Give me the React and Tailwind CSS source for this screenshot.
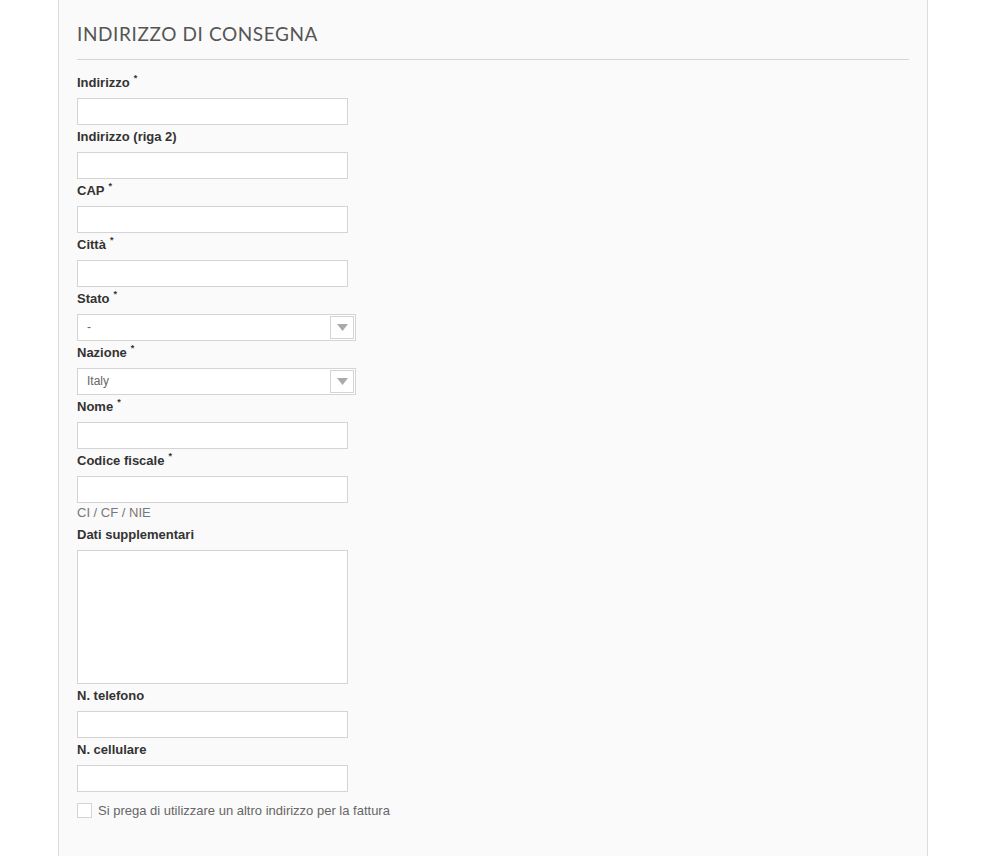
const fields = [
  { label: 'Indirizzo', required: true },
  { label: 'Indirizzo (riga 2)' },
  { label: 'CAP', required: true },
  { label: 'Città', required: true },
  { label: 'Stato', required: true, select: '-' },
  { label: 'Nazione', required: true, select: 'Italy' },
  { label: 'Nome', required: true },
  { label: 'Codice fiscale', required: true, hint: 'CI / CF / NIE' },
  { label: 'Dati supplementari', textarea: true },
  { label: 'N. telefono' },
  { label: 'N. cellulare' },
]

function Label({ text, required }) {
  return (
    <label className="block h-[27px] leading-[24px] text-[13px] font-bold text-[#333]">
      {text}
      {required && <sup className="ml-[4px] text-[9px] font-bold relative -top-[6px]">*</sup>}
    </label>
  )
}

function Select({ value }) {
  return (
    <div className="flex w-[279px] h-[27px] border border-[#d4d4d4] bg-white">
      <div className="flex-1 pl-[9px] text-[12px] leading-[25px] text-[#666]">{value}</div>
      <div className="w-[24px] m-[1px] border border-[#d4d4d4] bg-white flex items-center justify-center">
        <svg width="11" height="7" viewBox="0 0 11 7">
          <path d="M0 0h11L5.5 7z" fill="#aaa" />
        </svg>
      </div>
    </div>
  )
}

export default function App() {
  return (
    <div className="min-h-[856px] bg-white" style={{ fontFamily: '"Liberation Sans", Arial, sans-serif' }}>
      <div className="ml-[58px] w-[870px] min-h-[856px] bg-[#fafafa] border-x border-[#dcdcdc] px-[18px] pt-[22px]">
        <h2
          className="text-[19px] tracking-[0.6px] text-[#555] leading-[24px] pb-[13px] border-b border-[#d4d4d4]"
          style={{ fontFamily: 'Lato, "Liberation Sans", sans-serif' }}
        >
          INDIRIZZO DI CONSEGNA
        </h2>
        <div className="pt-[11px]">
          {fields.map(f => (
            <div key={f.label}>
              <Label text={f.label} required={f.required} />
              {f.select ? (
                <Select value={f.select} />
              ) : f.textarea ? (
                <textarea className="block w-[271px] h-[134px] border border-[#d4d4d4] bg-white resize-none" />
              ) : (
                <input className="block w-[271px] h-[27px] border border-[#d4d4d4] bg-white" />
              )}
              {f.hint && (
                <div className="h-[20px] leading-[20px] text-[13px] text-[#777]">{f.hint}</div>
              )}
            </div>
          ))}
          <div className="flex items-center gap-[6px] mt-[9px]">
            <span className="w-[15px] h-[15px] border border-[#d4d4d4] bg-white" />
            <span className="text-[13px] text-[#666]">Si prega di utilizzare un altro indirizzo per la fattura</span>
          </div>
        </div>
      </div>
    </div>
  )
}
